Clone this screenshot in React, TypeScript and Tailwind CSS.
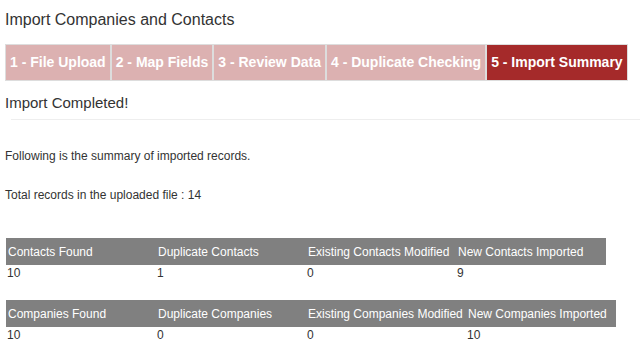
const steps = [
  { label: '1 - File Upload', active: false },
  { label: '2 - Map Fields', active: false },
  { label: '3 - Review Data', active: false },
  { label: '4 - Duplicate Checking', active: false },
  { label: '5 - Import Summary', active: true },
];

const contacts = [
  ['Contacts Found', '10'],
  ['Duplicate Contacts', '1'],
  ['Existing Contacts Modified', '0'],
  ['New Contacts Imported', '9'],
];

const companies = [
  ['Companies Found', '10'],
  ['Duplicate Companies', '0'],
  ['Existing Companies Modified', '0'],
  ['New Companies Imported', '10'],
];

function SummaryTable({ rows, cols }: { rows: string[][]; cols: string }) {
  return (
    <div className={`ml-[1px] grid ${cols} text-[12px]`}>
      {rows.map(([head]) => (
        <div key={head} className="flex h-[27px] items-center whitespace-nowrap bg-[#808080] pl-[2px] text-white">
          {head}
        </div>
      ))}
      {rows.map(([head, value]) => (
        <div key={head + '-v'} className="h-[16px] pl-[1px] leading-[16px] text-[#333]">
          {value}
        </div>
      ))}
    </div>
  );
}

export default function App() {
  return (
    <div className="min-h-screen overflow-hidden bg-white px-[5px] pt-[10px] text-[#333]" style={{ fontFamily: '"Liberation Sans", Arial, sans-serif' }}>
      <h1 className="text-[16px] leading-[20px]">Import Companies and Contacts</h1>

      <div className="mt-[14px] flex">
        {steps.map((s) => (
          <div
            key={s.label}
            className={`flex h-[37px] items-center whitespace-nowrap border border-[#ddd] px-[4px] text-[14px] font-bold text-white ${
              s.active ? 'bg-[#a52a2a]' : 'bg-[#dcb1b1]'
            }`}
          >
            {s.label}
          </div>
        ))}
      </div>

      <h2 className="mt-[12px] text-[15px] leading-[20px]">Import Completed!</h2>
      <div className="ml-[6px] mr-[-5px] mt-[6px] h-px bg-[#eee]" />

      <p className="mt-[28px] text-[12px] leading-[16px]">Following is the summary of imported records.</p>
      <p className="mt-[23px] text-[12px] leading-[16px]">Total records in the uploaded file : 14</p>

      <div className="mt-[35px]">
        <SummaryTable rows={contacts} cols="w-[600px] grid-cols-[150px_150px_150px_150px]" />
      </div>
      <div className="mt-[19px]">
        <SummaryTable rows={companies} cols="w-[610px] grid-cols-[150px_150px_160px_150px]" />
      </div>
    </div>
  );
}
